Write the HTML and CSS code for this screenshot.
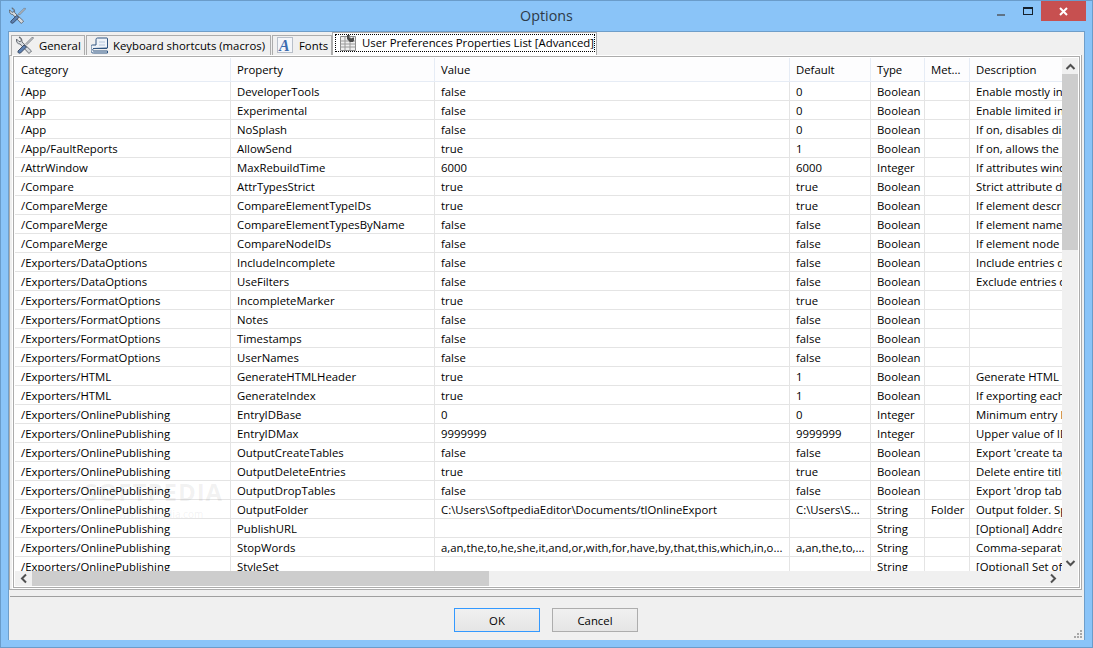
FILE: index.html
```html
<!DOCTYPE html>
<html lang="en">
<head>
<meta charset="utf-8">
<title>Options</title>
<link rel="stylesheet" href="styles.css">
</head>
<body>
<div class="window">
  <header class="titlebar">
    <svg class="app-icon" width="17" height="17" viewBox="0 0 18 18"><path d="M3 1l2.500 3-1 1.500-1.500 0-2.500-2.500c-.5 3 1 5 3.500 5l9 9.500 2.500-2.500-9.500-9c0-3-1-5-3-5z" fill="#d6dade" stroke="#5a6068" stroke-width=".9"/><path d="M16.500 1l-6.500 6.500 1 1 6.500-6.500z" fill="#dfe2e6" stroke="#5a6068" stroke-width=".8"/><path d="M8 9l-6 6c-.5 2 1 2.500 2.500 2l6-6z" fill="#5c7fb0" stroke="#33445f" stroke-width=".9"/></svg>
    <div class="title">Options</div>
    <div class="controls">
      <span class="ctl"><i class="min"></i></span>
      <span class="ctl"><i class="max"></i></span>
      <span class="close"><svg width="9" height="9" viewBox="0 0 9 9"><path d="M1 1l7 7M8 1l-7 7" stroke="#fff" stroke-width="2"/></svg></span>
    </div>
  </header>
  <main class="client">
    <nav class="tabs">
      <div class="tab t-general">
        <svg width="18" height="18" viewBox="0 0 18 18"><path d="M3 1l2.500 3-1 1.500-1.500 0-2.500-2.500c-.5 3 1 5 3.500 5l9 9.500 2.500-2.500-9.500-9c0-3-1-5-3-5z" fill="#d6dade" stroke="#5a6068" stroke-width=".9"/><path d="M16.500 1l-6.500 6.500 1 1 6.500-6.500z" fill="#dfe2e6" stroke="#5a6068" stroke-width=".8"/><path d="M8 9l-6 6c-.5 2 1 2.500 2.500 2l6-6z" fill="#5c7fb0" stroke="#33445f" stroke-width=".9"/></svg>
        <span>General</span>
      </div>
      <div class="tab t-keys">
        <svg width="17" height="17" viewBox="0 0 17 17"><path d="M6.500 1h9.500c.5 0 .5.5.5 1v9l-14 .5c-1 .5-1 2 0 2.500h14v2h-14c-2 0-2.500-1-2.500-2.500v-4c0-1 .5-1.500 1.500-1.500h3.500v-5c0-1 .5-2 1-2z" fill="#eef3f9" stroke="#2f5480"/><path d="M2 11.500h14" stroke="#2f5480"/><path d="M8 5h6M8 8h6" stroke="#b4c6dc"/></svg>
        <span>Keyboard shortcuts (macros)</span>
      </div>
      <div class="tab t-fonts">
        <svg width="16" height="16" viewBox="0 0 16 16"><rect x=".5" y=".5" width="15" height="15" fill="#f4f6fa" stroke="#7f8a9c" stroke-dasharray="1 1"/><text x="2" y="14" class="glyph">A</text></svg>
        <span>Fonts</span>
      </div>
      <div class="tab active">
        <div class="focus">
          <svg width="16" height="16" viewBox="0 0 16 16"><path d="M.5 1.500h15v14h-15z" fill="#efefef" stroke="#8c8c8c"/><path d="M.5 6h15M.5 9h15M.5 12h15M5 1.500v14M10 1.500v14" stroke="#9a9a9a"/><path d="M7 0l3 0-1 2 2 1.500 2-1 1 0 0 3-1 1.500-3 0-3-3z" fill="#4a4a4a"/></svg>
          <span>User Preferences Properties List [Advanced]</span>
        </div>
      </div>
    </nav>
    <section class="panel">
      <div class="frame">
        <div class="grid-area">
          <div class="grid-clip">
            <table class="grid">
              <colgroup><col class="c1"><col class="c2"><col class="c3"><col class="c4"><col class="c5"><col class="c6"><col class="c7"></colgroup>
              <thead><tr><th>Category</th><th>Property</th><th>Value</th><th>Default</th><th>Type</th><th>Met...</th><th>Description</th></tr></thead>
              <tbody>
                <tr><td>/App</td><td>DeveloperTools</td><td>false</td><td>0</td><td>Boolean</td><td></td><td>Enable mostly internal features</td></tr>
                <tr><td>/App</td><td>Experimental</td><td>false</td><td>0</td><td>Boolean</td><td></td><td>Enable limited internal features</td></tr>
                <tr><td>/App</td><td>NoSplash</td><td>false</td><td>0</td><td>Boolean</td><td></td><td>If on, disables display</td></tr>
                <tr><td>/App/FaultReports</td><td>AllowSend</td><td>true</td><td>1</td><td>Boolean</td><td></td><td>If on, allows the sending</td></tr>
                <tr><td>/AttrWindow</td><td>MaxRebuildTime</td><td>6000</td><td>6000</td><td>Integer</td><td></td><td>If attributes window takes</td></tr>
                <tr><td>/Compare</td><td>AttrTypesStrict</td><td>true</td><td>true</td><td>Boolean</td><td></td><td>Strict attribute data</td></tr>
                <tr><td>/CompareMerge</td><td>CompareElementTypeIDs</td><td>true</td><td>true</td><td>Boolean</td><td></td><td>If element description</td></tr>
                <tr><td>/CompareMerge</td><td>CompareElementTypesByName</td><td>false</td><td>false</td><td>Boolean</td><td></td><td>If element names match</td></tr>
                <tr><td>/CompareMerge</td><td>CompareNodeIDs</td><td>false</td><td>false</td><td>Boolean</td><td></td><td>If element node IDs match</td></tr>
                <tr><td>/Exporters/DataOptions</td><td>IncludeIncomplete</td><td>false</td><td>false</td><td>Boolean</td><td></td><td>Include entries during</td></tr>
                <tr><td>/Exporters/DataOptions</td><td>UseFilters</td><td>false</td><td>false</td><td>Boolean</td><td></td><td>Exclude entries during</td></tr>
                <tr><td>/Exporters/FormatOptions</td><td>IncompleteMarker</td><td>true</td><td>true</td><td>Boolean</td><td></td><td></td></tr>
                <tr><td>/Exporters/FormatOptions</td><td>Notes</td><td>false</td><td>false</td><td>Boolean</td><td></td><td></td></tr>
                <tr><td>/Exporters/FormatOptions</td><td>Timestamps</td><td>false</td><td>false</td><td>Boolean</td><td></td><td></td></tr>
                <tr><td>/Exporters/FormatOptions</td><td>UserNames</td><td>false</td><td>false</td><td>Boolean</td><td></td><td></td></tr>
                <tr><td>/Exporters/HTML</td><td>GenerateHTMLHeader</td><td>true</td><td>1</td><td>Boolean</td><td></td><td>Generate HTML header</td></tr>
                <tr><td>/Exporters/HTML</td><td>GenerateIndex</td><td>true</td><td>1</td><td>Boolean</td><td></td><td>If exporting each title</td></tr>
                <tr><td>/Exporters/OnlinePublishing</td><td>EntryIDBase</td><td>0</td><td>0</td><td>Integer</td><td></td><td>Minimum entry ID value</td></tr>
                <tr><td>/Exporters/OnlinePublishing</td><td>EntryIDMax</td><td>9999999</td><td>9999999</td><td>Integer</td><td></td><td>Upper value of ID range</td></tr>
                <tr><td>/Exporters/OnlinePublishing</td><td>OutputCreateTables</td><td>false</td><td>false</td><td>Boolean</td><td></td><td>Export 'create table'</td></tr>
                <tr><td>/Exporters/OnlinePublishing</td><td>OutputDeleteEntries</td><td>true</td><td>true</td><td>Boolean</td><td></td><td>Delete entire title</td></tr>
                <tr><td>/Exporters/OnlinePublishing</td><td>OutputDropTables</td><td>false</td><td>false</td><td>Boolean</td><td></td><td>Export 'drop table'</td></tr>
                <tr><td>/Exporters/OnlinePublishing</td><td>OutputFolder</td><td>C:\Users\SoftpediaEditor\Documents/tlOnlineExport</td><td>C:\Users\S...</td><td>String</td><td>Folder</td><td>Output folder. Specify</td></tr>
                <tr><td>/Exporters/OnlinePublishing</td><td>PublishURL</td><td></td><td></td><td>String</td><td></td><td>[Optional] Address of site</td></tr>
                <tr><td>/Exporters/OnlinePublishing</td><td>StopWords</td><td>a,an,the,to,he,she,it,and,or,with,for,have,by,that,this,which,in,o...</td><td>a,an,the,to,...</td><td>String</td><td></td><td>Comma-separated list</td></tr>
                <tr><td>/Exporters/OnlinePublishing</td><td>StyleSet</td><td></td><td></td><td>String</td><td></td><td>[Optional] Set of styles</td></tr>
              </tbody>
            </table>
            <div class="watermark">SOFTPEDIA<small>www.softpedia.com</small></div>
          </div>
          <div class="vbar">
            <span class="sbtn"><svg width="11" height="7" viewBox="0 0 11 7"><path d="M1.500 6l4-4 4 4" fill="none" stroke="#505050" stroke-width="2"/></svg></span>
            <span class="vthumb"></span>
            <span class="vtrack"></span>
            <span class="sbtn"><svg width="11" height="7" viewBox="0 0 11 7"><path d="M1.500 1l4 4 4-4" fill="none" stroke="#505050" stroke-width="2"/></svg></span>
          </div>
          <div class="hbar">
            <span class="sbtn"><svg width="7" height="11" viewBox="0 0 7 11"><path d="M6 1.500l-4 4 4 4" fill="none" stroke="#505050" stroke-width="2"/></svg></span>
            <span class="hthumb"></span>
            <span class="htrack"></span>
            <span class="sbtn"><svg width="7" height="11" viewBox="0 0 7 11"><path d="M1 1.500l4 4-4 4" fill="none" stroke="#505050" stroke-width="2"/></svg></span>
          </div>
          <div class="corner"></div>
        </div>
      </div>
    </section>
    <footer class="buttons">
      <button class="btn default" type="button">OK</button>
      <button class="btn" type="button">Cancel</button>
    </footer>
    <svg class="grip" width="9" height="9" viewBox="0 0 9 9"><path d="M7 1h2v2H7zM4 4h2v2H4zM7 4h2v2H7zM1 7h2v2H1zM4 7h2v2H4zM7 7h2v2H7z" fill="#a8a8a8"/></svg>
  </main>
</div>
</body>
</html>
```
FILE: styles.css
```css
* { box-sizing: border-box; }
html, body { margin: 0; height: 100%; overflow: hidden; }
body { font-family: "Open Sans", "Noto Sans", "Liberation Sans", sans-serif; font-size: 11.35px; color: #000; }
.window { width: 1093px; height: 648px; background: #8ac4f8; border: 1px solid #6a9cca; display: flex; flex-direction: column; padding: 0 7px 7px; }
.titlebar { height: 30px; display: flex; align-items: center; position: relative; flex: none; }
.app-icon { margin-left: 1px; margin-top: -2px; }
.title { position: absolute; left: 0; right: 0; text-align: center; font-size: 14.3px; color: #2d3a48; top: 5px; }
.controls { margin-left: auto; margin-right: -1px; margin-top: -10px; height: 20px; display: flex; position: relative; }
.ctl { width: 27px; height: 20px; display: flex; align-items: center; justify-content: center; }
.min { width: 8px; height: 2px; background: #5f7386; margin-top: 7px; display: block; }
.max { width: 10px; height: 8px; border: 1px solid #14202c; border-top-width: 2px; display: block; }
.close { width: 45px; height: 20px; background: #c75050; display: flex; align-items: center; justify-content: center; }
.client { flex: 1; background: #f0f0f0; border: 1px solid #6f9ec9; border-width: 1px 1px 0 1px; display: flex; flex-direction: column; position: relative; padding: 0 2px 0 0; min-height: 0; }
.tabs { height: 23px; display: flex; align-items: flex-end; flex: none; padding-left: 2px; gap: 1px; }
.tab { height: 20px; background: #f0f0f0; border: 1px solid #acacac; border-bottom: 0; display: flex; align-items: center; white-space: nowrap; color: #000; padding-bottom: 1px; }
.t-general { width: 74px; padding-left: 4px; gap: 5px; }
.t-keys { width: 185px; padding-left: 4px; gap: 5px; }
.t-fonts { width: 60px; padding-left: 4px; gap: 6px; }
.active { width: 265px; height: 23px; background: #fff; margin-left: -1px; padding: 1px 1px 2px 2px; align-items: flex-start; }
.focus { flex: 1; height: 18px; border: 1px dotted #000; display: flex; align-items: center; gap: 6px; padding: 0 0 1px 4px; }
.glyph { font-family: "Liberation Serif", serif; font-weight: bold; font-style: italic; font-size: 16px; fill: #3c6cb0; }
.panel { height: 535px; flex: none; background: #f0f0f0; border: 1px solid #acacac; padding: 0 1px 1px 3px; display: flex; }
.frame { flex: 1; border: 1px solid #acacac; background: #fff; padding: 1px; display: flex; box-shadow: 0 0 0 1px #fff; min-width: 0; }
.grid-area { flex: 1; display: grid; grid-template-columns: 1fr 16px; grid-template-rows: 1fr 15px; min-width: 0; min-height: 0; }
.grid-clip { position: relative; overflow: hidden; background: #fff; min-width: 0; min-height: 0; }
.grid { border-collapse: separate; border-spacing: 0; table-layout: fixed; width: 1300px; }
.c1 { width: 216px; } .c2 { width: 204px; } .c3 { width: 355px; } .c4 { width: 81px; } .c5 { width: 54px; } .c6 { width: 45px; } .c7 { width: 345px; }
.grid th { height: 24px; font-weight: 400; text-align: left; padding: 0 0 0 6px; background: #fdfdfe; border-right: 1px solid #e6ecf5; border-bottom: 1px solid #e6ecf5; white-space: nowrap; overflow: hidden; }
.grid td { height: 19px; padding: 2px 0 0 6px; border-right: 1px solid #e4e4e4; border-bottom: 1px solid #e4e4e4; white-space: nowrap; overflow: hidden; line-height: 16px; }
.vbar { background: #f0f0f0; display: flex; flex-direction: column; }
.hbar { background: #f0f0f0; display: flex; }
.sbtn { display: flex; align-items: center; justify-content: center; flex: none; }
.vbar .sbtn { height: 16px; }
.hbar .sbtn { width: 17px; }
.vthumb { height: 176px; background: #cdcdcd; flex: none; }
.vtrack, .htrack { flex: 1; }
.hthumb { width: 457px; background: #cdcdcd; flex: none; }
.corner { background: #f0f0f0; }
.watermark { position: absolute; left: 69px; top: 421px; font-size: 24px; font-weight: 700; color: rgba(120,120,120,.1); pointer-events: none; letter-spacing: 1px; line-height: 26px; }
.watermark small { display: block; font-size: 10px; font-weight: 400; text-align: right; letter-spacing: 0; line-height: 12px; margin: 3px 20px 0 0; }
.buttons { flex: 1; margin: 6px 0 0 1px; border-top: 1px solid #a0a0a0; display: flex; justify-content: center; align-items: flex-start; gap: 12px; padding-top: 11px; }
.btn { width: 86px; height: 24px; border: 1px solid #adadad; background: linear-gradient(#f0f0f0, #e5e5e5); font: inherit; padding: 0; color: #000; }
.default { border-color: #3399ff; }
.grip { position: absolute; right: 2px; bottom: 2px; }
```
